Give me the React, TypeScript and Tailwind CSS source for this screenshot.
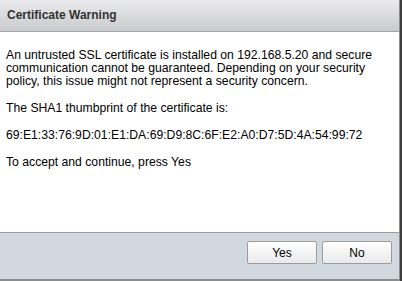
const App = () => {
  return (
    <div className="flex h-[281px] w-[402px] bg-[#3c3c3c] font-['Liberation_Sans',Arial,sans-serif]">
      <div className="flex h-[281px] w-[400px] flex-col border-r border-b-2 border-[#8c8c8c] bg-white">
        <div className="flex h-[32px] shrink-0 items-center border-b border-[#a3a3a3] bg-gradient-to-b from-[#ebebed] to-[#c9cacd] pl-[7px] pb-[1px]">
          <span className="text-[12px] font-bold text-[#333]">Certificate Warning</span>
        </div>
        <div className="flex flex-1 flex-col gap-[14px] px-[6px] pt-[17px] text-[12.2px] leading-[13px] text-black">
          <p className="pr-[20px]">
            An untrusted SSL certificate is installed on 192.168.5.20 and secure communication cannot be guaranteed.
            Depending on your security policy, this issue might not represent a security concern.
          </p>
          <p>The SHA1 thumbprint of the certificate is:</p>
          <p>69:E1:33:76:9D:01:E1:DA:69:D9:8C:6F:E2:A0:D7:5D:4A:54:99:72</p>
          <p>To accept and continue, press Yes</p>
        </div>
        <div className="flex h-[47px] shrink-0 items-start justify-end gap-[5px] border-t border-[#9a9a9a] bg-[#d1d8df] pt-[8px] pr-[7px]">
          <button className="h-[23px] w-[70px] rounded-[2px] border border-[#9c9c9c] bg-gradient-to-b from-white to-[#eaeaea] text-[12px] text-black">
            Yes
          </button>
          <button className="h-[23px] w-[70px] rounded-[2px] border border-[#9c9c9c] bg-gradient-to-b from-white to-[#eaeaea] text-[12px] text-black">
            No
          </button>
        </div>
      </div>
    </div>
  );
};

export default App;
